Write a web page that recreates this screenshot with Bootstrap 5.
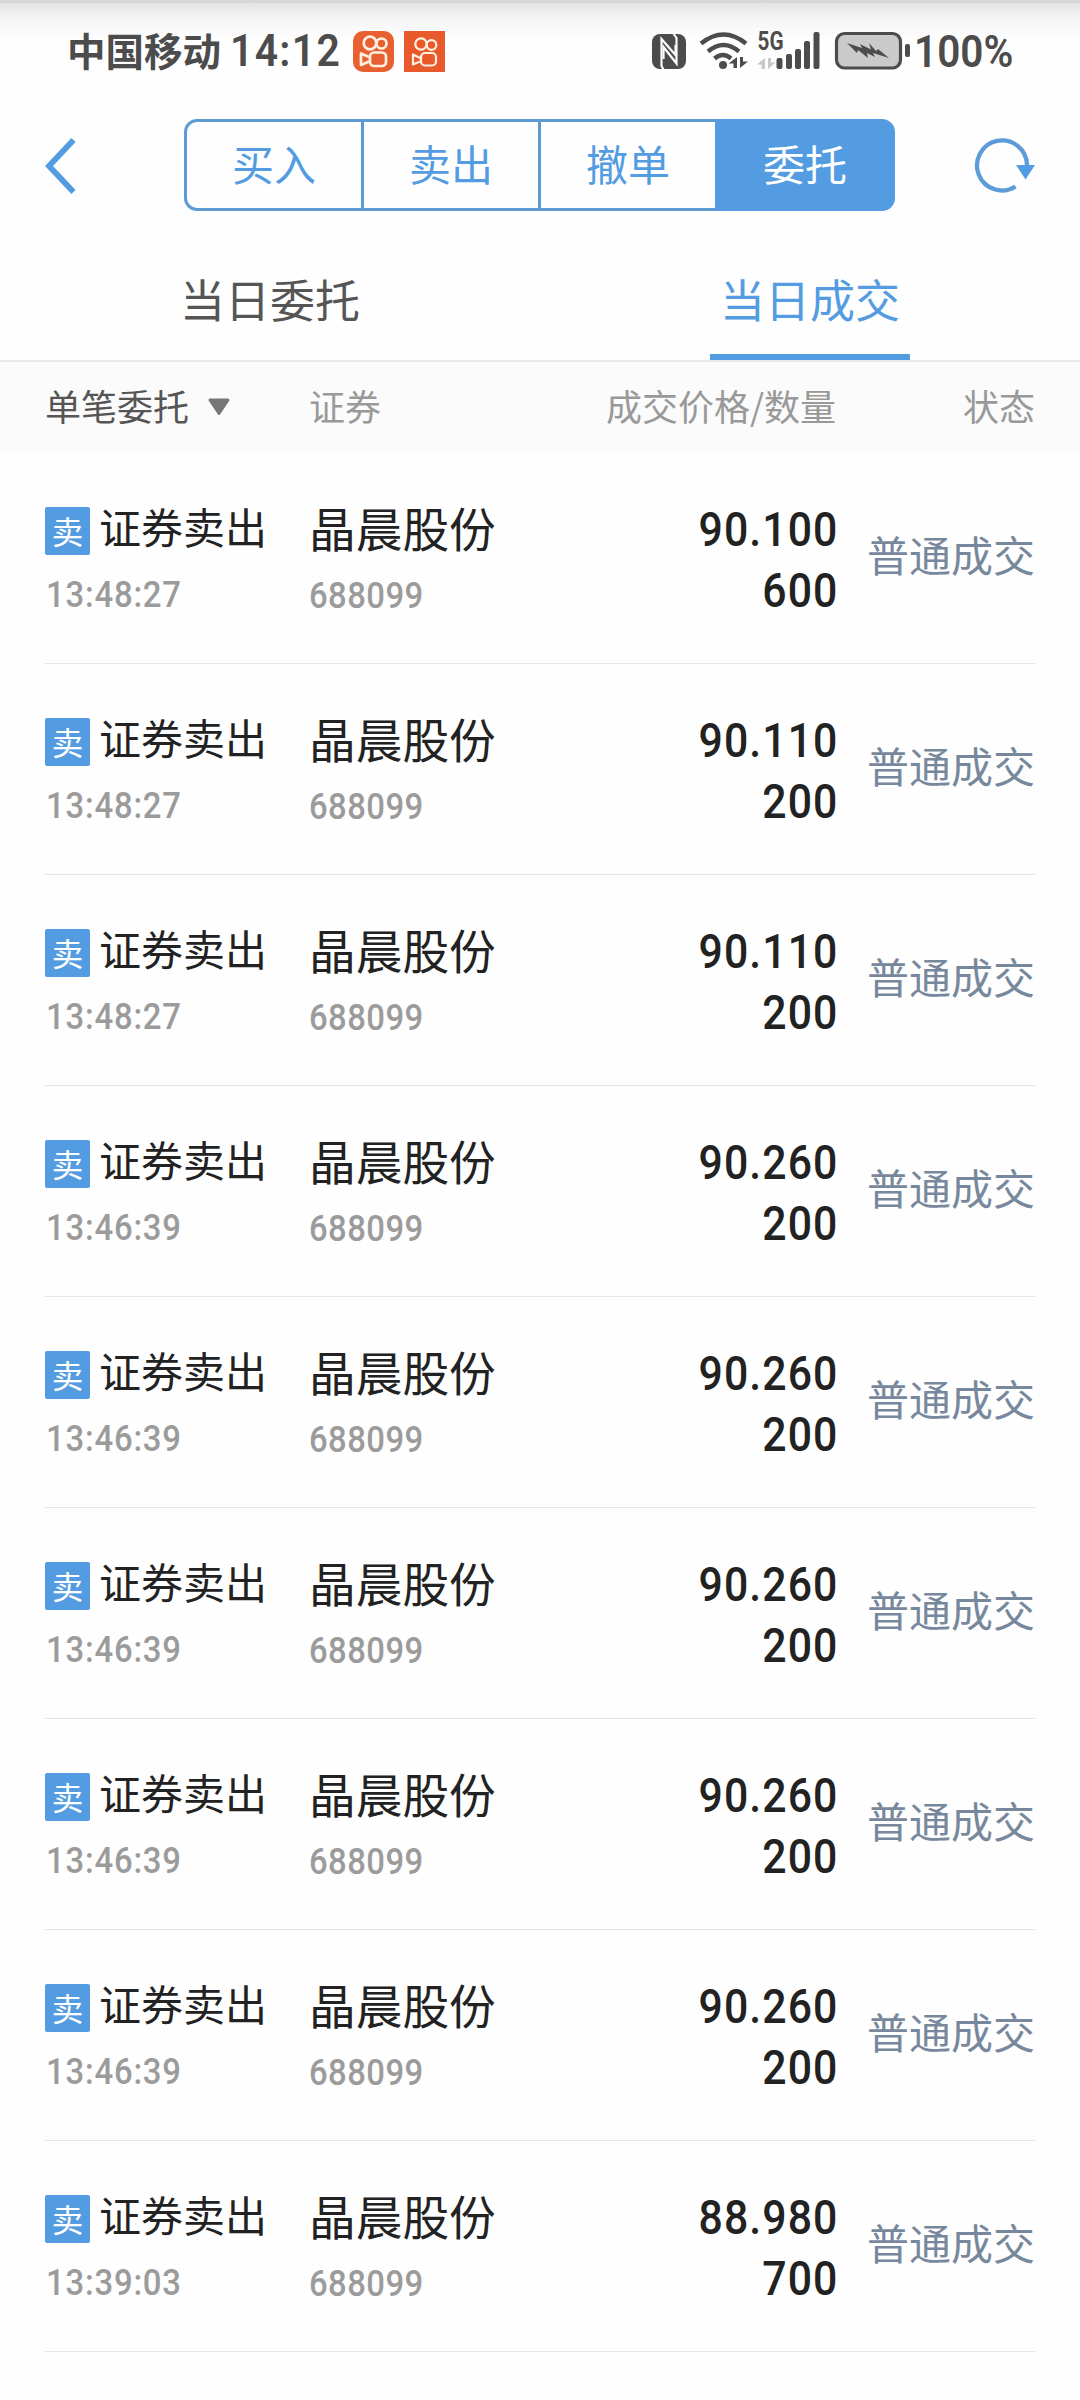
<!DOCTYPE html>
<html lang="zh-CN">
<head>
<meta charset="utf-8">
<meta name="viewport" content="width=device-width, initial-scale=1">
<title>当日成交</title>
<link href="https://cdn.jsdelivr.net/npm/bootstrap@5.3.0/dist/css/bootstrap.min.css" rel="stylesheet">
<style>
  :root { --brand: #539ce2; }
  body { font-family: "Noto Sans CJK SC", sans-serif; background: #fefefe; color: #222; overflow: hidden; }
  .screen { width: 1080px; height: 2400px; overflow: hidden; }
  .digits { font-family: Roboto, "Noto Sans CJK SC", sans-serif; }
  .statusbar { height: 104px; padding: 0 68px 0 67px; color: #4c4c4c;
    background: linear-gradient(#d6d6d6 0 3px, #e4e4e4 3px, #f2f2f2 16px, #fafafa 30px, #fefefe 42px); }
  .statusbar svg { display: block; flex: none; }
  .carrier { font-size: 38.5px; font-weight: 700; line-height: 46px; margin-top: 26px; white-space: nowrap; }
  .clock { font-size: 44px; font-weight: 600; line-height: 46px; margin: 28px 0 0 9px; width: 123px; flex: none; letter-spacing: 1.4px; white-space: nowrap; transform: scaleX(.93); transform-origin: left; }
  .app-icon { margin-top: 31px; }
  .sys-icons { margin-top: 26px; }
  .battery-pct { font-size: 44px; font-weight: 600; line-height: 46px; margin: 29px 0 0 4px; width: 98px; flex: none; white-space: nowrap; transform: scaleX(.92); transform-origin: left; }
  .navrow { height: 122px; padding: 0 45px; }
  .back-icon { margin-top: 34px; }
  .reload-icon { margin-top: 33px; }
  .seg { width: 711px; height: 92px; margin: 15px 0 0 108px; }
  .seg .btn { --bs-btn-color: var(--brand); --bs-btn-border-color: #5f9bd3; --bs-btn-border-width: 3px; --bs-btn-border-radius: 13px;
    --bs-btn-active-bg: var(--brand); --bs-btn-active-border-color: var(--brand); --bs-btn-active-color: #fff;
    --bs-btn-font-size: 42px; --bs-btn-line-height: 50px; --bs-btn-padding-x: 0; --bs-btn-padding-y: 0;
    flex: 1 1 0; padding-bottom: 4px; }
  .seg.btn-group > .btn:not(:first-child) { margin-left: -3px; }
  .tabrow { height: 136px; border-bottom: 2px solid #e8e8e8; }
  .tabrow .nav-link { font-size: 45px; line-height: 60px; color: #555; padding: 43px 0 25px; width: 200px; border-bottom: 6px solid transparent; text-align: center; white-space: nowrap; }
  .tabrow .nav-link.active { color: var(--brand); border-color: var(--brand); }
  .thead-row { height: 90px; background: #fbfbfb; padding: 0 45px; font-size: 36px; line-height: 86px; color: #999; }
  .sorter { color: #555; }
  .sorter svg { margin: 0 0 8px 18px; }
  .c-type { width: 264px; flex: none; }
  .c-state { width: 199px; flex: none; text-align: right; white-space: nowrap; }
  .deal { height: 211px; margin: 0 45px; border-bottom: 1px solid #e6e6e6; }
  .deal:first-child { height: 212px; }
  .deal:first-child > * { margin-top: 1px; }
  .side-tag { width: 45px; height: 48px; background: var(--brand); color: #fff; border-radius: 2px; font-size: 31.5px; line-height: 47px; text-align: center; margin-top: 54px; }
  .deal-kind { font-size: 42px; line-height: 50px; margin: 48px 0 0 9px; white-space: nowrap; }
  .deal-name { font-size: 46.7px; line-height: 56px; margin-top: 46px; }
  .deal-time, .deal-code { font-size: 36.5px; font-weight: 500; line-height: 40px; color: #9b9b9b; transform: scaleX(.9); transform-origin: left; }
  .deal-time { margin: 20px 0 0 1px; letter-spacing: .9px; }
  .deal-code { margin: 21px 0 0 0; letter-spacing: .5px; }
  .deal-num { font-size: 47.5px; font-weight: 500; line-height: 61px; text-align: right; padding-top: 47px; margin-right: -2px; letter-spacing: 1.2px; transform: scaleX(.9); transform-origin: right; }
  .deal-state { font-size: 42px; line-height: 50px; padding-top: 76px; margin-left: 2px; width: 197px; color: #77889d; }
</style>
</head>
<body>
<main class="screen d-flex flex-column">
  <header class="statusbar d-flex align-items-start">
    <span class="carrier">中国移动</span>
    <span class="clock digits">14:12</span>
    <svg class="app-icon" width="41" height="41" viewBox="0 0 41 41"><rect width="41" height="41" rx="10" fill="#e8602f"/><g fill="none" stroke="#fff0e0" stroke-width="2.700"><circle cx="17" cy="12" r="6.300"/><circle cx="28.500" cy="12.500" r="5"/><rect x="17" y="21.500" width="16" height="13.500" rx="4"/><path d="M16 26 8 22.500v11.500l8-3.500" stroke-linejoin="round"/></g></svg>
    <svg class="app-icon ms-2" width="43" height="41" viewBox="-2 0 43 41"><rect width="41" height="41" fill="#e8592c"/><g fill="none" stroke="#fff0e0" stroke-width="2.200"><circle cx="17" cy="13" r="5.700"/><circle cx="27.500" cy="14" r="4.800"/><rect x="17" y="22" width="15" height="12.500" rx="4"/><path d="M16 27 9 23.500v10l7-3" stroke-linejoin="round"/></g></svg>
    <svg class="sys-icons ms-auto" width="258" height="46" viewBox="652 26 258 46">
      <rect x="652" y="34" width="34" height="35" rx="8" fill="#4c4c4c"/>
      <path d="M663.500 69.500 661.500 66V39L675.500 55V45" fill="none" stroke="#fafafa" stroke-width="2.200"/>
      <path d="M663.500 59V47L676.500 63.500V38L673.500 33.500" fill="none" stroke="#fafafa" stroke-width="2.200"/>
      <g fill="none" stroke="#4c4c4c" stroke-width="4.500">
        <path d="M701 43.500Q723.500 25.500 746 43.500"/>
        <path d="M708 51.500Q723.500 38.500 739 51.500"/>
        <path d="M714.500 58.500Q723 51.500 731 58.500"/>
      </g>
      <circle cx="723" cy="65" r="4" fill="#4c4c4c"/>
      <path d="M737 57v11h-3.500v-4.500h-5zM740 68V57h3v4.500h5z" fill="#4c4c4c"/>
      <path d="M765 58v11h-3.500v-4.500h-4.500zM768 69V58h3v4.500h4.500z" fill="#c8c8c8"/>
      <g fill="#4c4c4c"><rect x="776.500" y="58" width="6" height="11" rx="2"/><rect x="786" y="54" width="6" height="15" rx="2"/><rect x="795" y="49" width="6" height="20" rx="2"/><rect x="804" y="41" width="6" height="28" rx="2"/><rect x="813.500" y="32" width="6" height="37" rx="2"/></g>
      <text x="757.500" y="50" font-family="Roboto, sans-serif" font-weight="700" font-size="25" fill="#4c4c4c" textLength="26" lengthAdjust="spacingAndGlyphs">5G</text>
      <rect x="836.500" y="33.500" width="64" height="34.500" rx="8" fill="#cacaca" stroke="#4c4c4c" stroke-width="3.200"/>
      <path d="M847 43 862 48 860 44 871 49.500 869 43 876 51 878 49 889 58 873 53 875 57 867 53 868 58 858 50 857 53z" fill="#4c4c4c"/>
      <rect x="905" y="44" width="5" height="13" rx="2" fill="#4c4c4c"/>
    </svg>
    <span class="battery-pct digits">100%</span>
  </header>

  <nav class="navrow d-flex align-items-start">
    <svg class="back-icon" width="31" height="56" viewBox="0 0 31 56"><path d="M28.500 2 4 28 28.500 54" fill="none" stroke="#539ce2" stroke-width="5.800"/></svg>
    <div class="seg btn-group" role="group">
      <button type="button" class="btn">买入</button>
      <button type="button" class="btn">卖出</button>
      <button type="button" class="btn">撤单</button>
      <button type="button" class="btn active">委托</button>
    </div>
    <svg class="reload-icon ms-auto" width="61" height="56" viewBox="974 137 61 56"><path d="M1015.500 186.500A25 25 0 1 1 1027 165" fill="none" stroke="#5b9bd8" stroke-width="4.300"/><path d="M1016 165h19l-9.500 14.500z" fill="#539ce2"/></svg>
  </nav>

  <ul class="nav tabrow flex-nowrap">
    <li class="nav-item w-50 d-flex justify-content-center"><a class="nav-link">当日委托</a></li>
    <li class="nav-item w-50 d-flex justify-content-center"><a class="nav-link active">当日成交</a></li>
  </ul>

  <div class="thead-row d-flex">
    <div class="c-type sorter">单笔委托<svg width="24" height="18" viewBox="0 0 24 18"><path d="M3 2h18L12 15.500z" fill="#777" stroke="#777" stroke-width="3" stroke-linejoin="round"/></svg></div>
    <div>证券</div>
    <div class="ms-auto">成交价格/数量</div>
    <div class="c-state">状态</div>
  </div>

  <section id="deals"></section>
</main>

<script src="https://cdn.jsdelivr.net/npm/bootstrap@5.3.0/dist/js/bootstrap.bundle.min.js"></script>
<script>
  const deals = [
    ["13:48:27", "90.100", "600"],
    ["13:48:27", "90.110", "200"],
    ["13:48:27", "90.110", "200"],
    ["13:46:39", "90.260", "200"],
    ["13:46:39", "90.260", "200"],
    ["13:46:39", "90.260", "200"],
    ["13:46:39", "90.260", "200"],
    ["13:46:39", "90.260", "200"],
    ["13:39:03", "88.980", "700"]
  ];
  document.getElementById("deals").innerHTML = deals.map(([time, price, qty]) => `
    <article class="deal d-flex">
      <div class="c-type">
        <div class="d-flex align-items-start"><span class="side-tag">卖</span><span class="deal-kind">证券卖出</span></div>
        <div class="deal-time digits">${time}</div>
      </div>
      <div>
        <div class="deal-name">晶晨股份</div>
        <div class="deal-code digits">688099</div>
      </div>
      <div class="deal-num digits ms-auto"><div>${price}</div><div>${qty}</div></div>
      <div class="c-state deal-state">普通成交</div>
    </article>`).join("");
</script>
</body>
</html>
